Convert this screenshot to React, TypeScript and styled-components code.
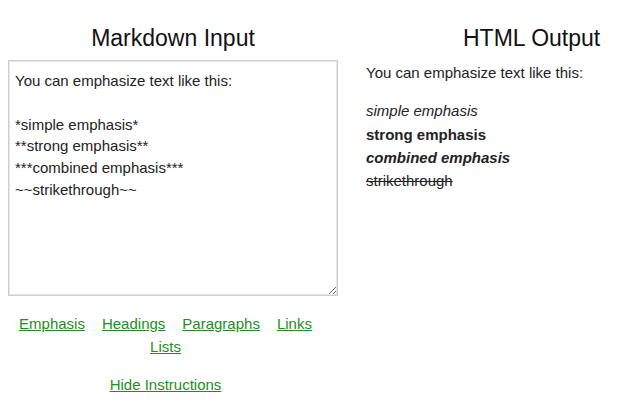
import React from "react";
import styled, { createGlobalStyle } from "styled-components";

const Global = createGlobalStyle`
  html, body { margin: 0; padding: 0; background: #fff; }
  body { font-family: "Liberation Sans", Arial, sans-serif; color: #222; overflow: hidden; }
`;

const Page = styled.div`
  display: grid;
  grid-template-columns: 330px 1fr;
  column-gap: 10px;
  padding: 0 8px;
  width: 640px;
  box-sizing: border-box;
`;

const Column = styled.div`
  display: flex;
  flex-direction: column;
`;

const Heading = styled.h2<{ $offset?: number }>`
  font-family: "Liberation Sans", Arial, sans-serif;
  font-weight: normal;
  font-size: 23px;
  color: #111;
  margin: 25px 0 9px;
  line-height: 26px;
  text-align: ${(p) => (p.$offset ? "left" : "center")};
  padding-left: ${(p) => p.$offset ?? 0}px;
`;

const Editor = styled.textarea`
  box-sizing: border-box;
  width: 330px;
  height: 236px;
  border: 1px solid #cfcfcf;
  box-shadow: inset 0 0 0 1px #e6e6e6;
  padding: 9px 7px 6px 6px;
  font-family: "Liberation Sans", Arial, sans-serif;
  font-size: 15px;
  line-height: 21.8px;
  color: #222;
  resize: both;
  outline: none;
  background: #fff;
`;

const Links = styled.div`
  text-align: center;
  padding-right: 15px;
  margin-top: 16px;
  line-height: 23px;
  font-size: 15px;
`;

const NavLink = styled.a`
  color: #1f8c1f;
  text-decoration: underline;
  margin: 0 8.5px;
  cursor: pointer;
`;

const Footer = styled.div`
  text-align: center;
  padding-right: 15px;
  margin-top: 15px;
  font-size: 15px;
  line-height: 23px;
`;

const Output = styled.div`
  padding-left: 18px;
  font-size: 15px;
  color: #222;
  margin-top: 1px;
`;

const Para = styled.p`
  margin: 0 0 15px;
  line-height: 23.3px;
`;

const source = `You can emphasize text like this:

*simple emphasis*
**strong emphasis**
***combined emphasis***
~~strikethrough~~`;

export default function App() {
  return (
    <>
      <Global />
      <Page>
        <Column>
          <Heading>Markdown Input</Heading>
          <Editor defaultValue={source} spellCheck={false} />
          <Links>
            <NavLink>Emphasis</NavLink>
            <NavLink>Headings</NavLink>
            <NavLink>Paragraphs</NavLink>
            <NavLink>Links</NavLink>
            <br />
            <NavLink>Lists</NavLink>
          </Links>
          <Footer>
            <NavLink>Hide Instructions</NavLink>
          </Footer>
        </Column>
        <Column>
          <Heading $offset={115}>HTML Output</Heading>
          <Output>
            <Para>You can emphasize text like this:</Para>
            <Para>
              <em>simple emphasis</em>
              <br />
              <strong>strong emphasis</strong>
              <br />
              <strong>
                <em>combined emphasis</em>
              </strong>
              <br />
              <del>strikethrough</del>
            </Para>
          </Output>
        </Column>
      </Page>
    </>
  );
}
